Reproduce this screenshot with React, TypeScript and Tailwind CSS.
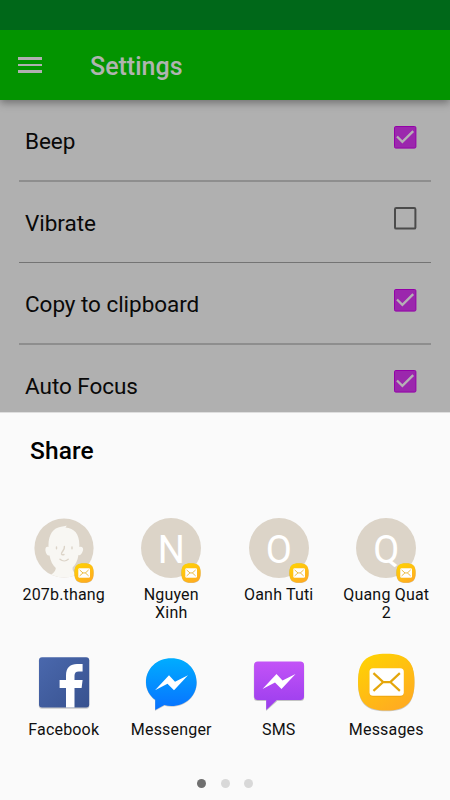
import React from 'react';

const BOLT = 'M0 15 L14 0 L20 6.5 L33 0 L19 15 L12.5 8.5 Z';

function CheckBox({ checked }: { checked: boolean }) {
  return (
    <svg className="block h-[23px] w-[23px]" viewBox="0 0 23 23">
      {checked ? (
        <>
          <rect x="0.5" y="0.5" width="21.4" height="21.6" rx="1.3" fill="#9b27ad" stroke="#9400a8" />
          <path d="M3 10.5 L8.4 15.9 L19.2 5.1" fill="none" stroke="#b5b0b5" strokeWidth="2.3" />
        </>
      ) : (
        <rect x="1" y="1" width="20.4" height="20.6" rx="1.2" fill="none" stroke="#4b4b4b" strokeWidth="2" />
      )}
    </svg>
  );
}

function Setting({ label, checked, frame, boxPad }: { label: string; checked: boolean; frame: string; boxPad: string }) {
  return (
    <div className={'mx-[19px] flex shrink-0 items-start justify-between pl-[6px] pr-[14px] ' + frame}>
      <span className="pt-[27px] text-[22.5px] leading-[28px] tracking-[-0.04px] text-[#090909]">{label}</span>
      <span className={boxPad}>
        <CheckBox checked={checked} />
      </span>
    </div>
  );
}

function MailIcon({ className, id }: { className: string; id: string }) {
  return (
    <svg className={className} viewBox="0 0 58 58">
      <defs>
        <linearGradient id={id} x1="0" y1="0" x2="0.6" y2="1">
          <stop offset="0" stopColor="#ffd500" />
          <stop offset="1" stopColor="#ffad20" />
        </linearGradient>
      </defs>
      <path
        d="M29 1.4 C48 1.4 57 8 57 29.4 C57 51 48 57.8 29 57.8 C10 57.8 1 51 1 29.4 C1 8 10 1.4 29 1.4 Z"
        fill="#00000033"
      />
      <path
        d="M29 .7 C48 .7 57 7 57 28.7 C57 50 48 57 29 57 C10 57 1 50 1 28.7 C1 7 10 .7 29 .7 Z"
        fill={'url(#' + id + ')'}
      />
      <rect x="12.4" y="16" width="34" height="27.5" rx="3.5" fill="#c9860044" />
      <rect x="12.4" y="15" width="34" height="27.5" rx="3.5" fill="#fff" />
      <path
        d="M16.3 20 L26 28.8 H33 L42.5 20 M16.3 37.5 L26 28.8 M33 28.8 L42.5 37.5"
        fill="none"
        stroke="#e4a60b"
        strokeWidth="2.2"
      />
    </svg>
  );
}

function FaceAvatar() {
  return (
    <svg className="block h-[60px] w-[60px]" viewBox="0 0 60 60">
      <defs>
        <clipPath id="face-clip">
          <circle cx="30" cy="30" r="29.6" />
        </clipPath>
      </defs>
      <circle cx="30" cy="30" r="29.6" fill="#dcd4c8" />
      <g clipPath="url(#face-clip)">
        <path
          d="M14.5 29 C14 17 19 10 27 8.8 C29 8.4 31 8.5 32.5 7.6 C32.5 8.5 32.2 9 31.4 9.5 C41 10 46 17 45.3 29 C49 28 50 31 48.4 34 C47.5 36.5 46 37.5 44.5 37 C43.4 43 41.5 47 38.6 49.5 V51.5 C39 54 43 57 47 59 V62 H12 V59 C18 57 21.5 54 21.8 50 C18.5 47 16.5 43 15.5 37.5 C13.5 38 12 36 11.5 33 C11 29.5 12.4 28 14.5 29 Z"
          fill="#f8f7f3"
        />
      </g>
      <path
        d="M22.5 29 V30.8 M38 29 V30.8 M30.4 28.5 C31 32 27 34 27.5 36 C28 37.1 29.5 36.7 30 36.5 M26 41.3 C28.5 43.4 32 43.4 34.2 41.3"
        fill="none"
        stroke="#dcd4c8"
        strokeWidth="1.4"
        strokeLinecap="round"
      />
    </svg>
  );
}

function Contact({ initial, name, id }: { initial?: string; name: React.ReactNode; id: string }) {
  return (
    <div className="flex flex-col items-center">
      <div className="relative h-[60px] w-[60px]">
        {initial ? (
          <div className="flex h-[60px] w-[60px] items-center justify-center rounded-full bg-[#dcd4c8] pt-[5px] text-[38px] leading-none text-white">
            {initial}
          </div>
        ) : (
          <FaceAvatar />
        )}
        <MailIcon id={id} className="absolute left-[40px] top-[45px] h-[20px] w-[20px]" />
      </div>
      <div className="mt-[8px] whitespace-nowrap text-center text-[16px] leading-[18.5px] tracking-[0.18px] text-[#101010]">
        {name}
      </div>
    </div>
  );
}

function AppTile({ name, children }: { name: string; children: React.ReactNode }) {
  return (
    <div className="flex flex-col items-center">
      <svg className="block h-[60px] w-[60px] overflow-visible" viewBox="0 0 60 60">
        {children}
      </svg>
      <div className="mt-[8px] whitespace-nowrap text-[16px] leading-[18.5px] tracking-[0.18px] text-[#101010]">{name}</div>
    </div>
  );
}

export default function App() {
  return (
    <div className="flex h-[800px] w-[450px] flex-col overflow-hidden bg-[#b0b0b0] font-['Roboto',sans-serif]">
      <div className="z-20 h-[30px] shrink-0 bg-[#006819]" />
      <header className="z-10 flex h-[70px] shrink-0 items-center bg-[#039400] pl-[18px] shadow-[0_3px_8px_rgba(0,0,0,0.36)]">
        <div className="flex w-[24px] flex-col gap-[4px]">
          <div className="h-[2.4px] bg-[#b0b0b0]" />
          <div className="h-[2.4px] bg-[#b0b0b0]" />
          <div className="h-[2.4px] bg-[#b0b0b0]" />
        </div>
        <h1 className="ml-[48px] pt-[4px] text-[25px] font-medium leading-[30px] text-[#b0b4b0]">Settings</h1>
      </header>
      <main className="flex h-[312px] shrink-0 flex-col overflow-hidden">
        <Setting label="Beep" checked boxPad="pt-[25.6px]" frame="h-[82px] border-b-2 border-[#8e8e8e]" />
        <Setting label="Vibrate" checked={false} boxPad="pt-[25px]" frame="h-[81px] border-b border-[#747474]" />
        <Setting label="Copy to clipboard" checked boxPad="pt-[25.6px]" frame="h-[82px] border-b-2 border-[#8e8e8e]" />
        <Setting label="Auto Focus" checked boxPad="pt-[25.3px]" frame="h-[82px]" />
      </main>
      <section className="flex flex-1 flex-col border-t border-[#dedede] bg-[#fafafa]">
        <h2 className="ml-[30px] mt-[23px] text-[24.5px] font-medium leading-[30px] tracking-[0.1px] text-black">Share</h2>
        <div className="mt-[51.5px] grid h-[135.5px] grid-cols-4 px-[10px]">
          <Contact id="mail-a" name="207b.thang" />
          <Contact id="mail-b" initial="N" name={<>Nguyen<br />Xinh</>} />
          <Contact id="mail-c" initial="O" name="Oanh Tuti" />
          <Contact id="mail-d" initial="Q" name={<>Quang Quat<br />2</>} />
        </div>
        <div className="grid grid-cols-4 px-[10px]">
          <AppTile name="Facebook">
            <defs>
              <linearGradient id="fb" x1="0" y1="0" x2="1" y2="1">
                <stop offset="0" stopColor="#4a68ad" />
                <stop offset="1" stopColor="#38528f" />
              </linearGradient>
            </defs>
            <rect x="4.8" y="5.2" width="50.5" height="50.5" rx="3" fill="#00000030" />
            <rect x="5" y="4.2" width="50.2" height="50.4" rx="3" fill="url(#fb)" />
            <path
              d="M32 54.6 V34.9 H25.6 V26.9 H32 V22.6 C32 14.1 36.5 10.9 43 10.9 H48.6 V18.5 H44.8 C41.8 18.5 40.5 19.9 40.5 22.8 V26.9 H48.6 L47.6 34.9 H40.5 V54.6 Z"
              fill="#fff"
            />
          </AppTile>
          <AppTile name="Messenger">
            <defs>
              <linearGradient id="msgr" x1="0" y1="0" x2="0" y2="1">
                <stop offset="0" stopColor="#00adff" />
                <stop offset="1" stopColor="#0871ff" />
              </linearGradient>
            </defs>
            <path
              d="M30.3 6 C15.7 6 4.8 16.3 4.8 29.8 C4.8 36.8 8.5 43.2 14 47.4 V57.9 L23.4 52.8 C25.6 53.4 27.9 53.8 30.3 53.8 C44.9 53.8 55.8 43.4 55.8 29.8 C55.8 16.3 44.9 6 30.3 6 Z"
              fill="#00000030"
            />
            <path
              d="M30.3 5.2 C15.7 5.2 5 15.6 5 29.2 C5 36.4 8.5 42.6 14.2 46.8 V57 L23.4 52.1 C25.6 52.7 27.9 53 30.3 53 C44.9 53 55.6 42.8 55.6 29.2 C55.6 15.6 44.9 5.2 30.3 5.2 Z"
              fill="url(#msgr)"
            />
            <path d={BOLT} transform="translate(14 22.3)" fill="#fff" />
          </AppTile>
          <AppTile name="SMS">
            <defs>
              <linearGradient id="sms" x1="0" y1="0" x2="0" y2="1">
                <stop offset="0" stopColor="#c353f7" />
                <stop offset="1" stopColor="#993ded" />
              </linearGradient>
            </defs>
            <path
              d="M8.8 9.2 H51.3 Q55.2 9.2 55.2 13 V44.5 Q55.2 48 51.3 48 H28.3 L17.2 58 V48 H8.8 Q4.8 48 4.8 44.5 V13 Q4.8 9.2 8.8 9.2 Z"
              fill="#00000038"
            />
            <path
              d="M8.8 8.4 H51.3 Q55 8.4 55 12 V43.3 Q55 47 51.3 47 H27.8 L17.2 57 V47 H8.8 Q5.1 47 5.1 43.3 V12 Q5.1 8.4 8.8 8.4 Z"
              fill="url(#sms)"
            />
            <path d={BOLT} transform="translate(13.5 21)" fill="#fff" />
          </AppTile>
          <div className="flex flex-col items-center">
            <div className="flex h-[60px] items-start">
              <MailIcon id="mail-large" className="block h-[58.5px] w-[58.5px]" />
            </div>
            <div className="mt-[8px] text-[16px] leading-[18.5px] tracking-[0.18px] text-[#101010]">Messages</div>
          </div>
        </div>
        <div className="mt-[39.5px] flex justify-center gap-[14.8px]">
          <div className="h-[9px] w-[9px] rounded-full bg-[#6f6f6f]" />
          <div className="h-[9px] w-[9px] rounded-full bg-[#d8d8d8]" />
          <div className="h-[9px] w-[9px] rounded-full bg-[#d8d8d8]" />
        </div>
      </section>
    </div>
  );
}
